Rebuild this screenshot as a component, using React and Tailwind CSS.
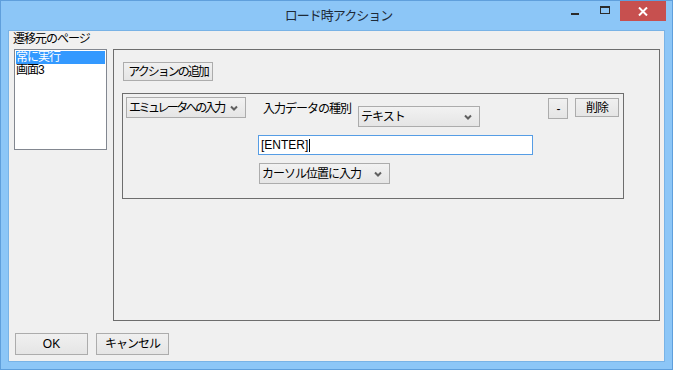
import React from 'react';

const Chevron = () => (
  <svg width="8" height="6" viewBox="0 0 8 6" className="shrink-0">
    <path d="M1 1.5 L4 4.5 L7 1.5" fill="none" stroke="#606060" strokeWidth="2" />
  </svg>
);

const Combo = ({ label, className, textClass = '' }) => (
  <div className={`flex items-center h-[21px] border border-[#acacac] bg-linear-to-b from-[#f2f2f2] to-[#e5e5e5] pl-[2px] pr-[7px] ${className}`}>
    <span className={`flex-1 leading-[14px] whitespace-nowrap overflow-hidden ${textClass}`}>{label}</span>
    <Chevron />
  </div>
);

const Btn = ({ children, className }) => (
  <div className={`flex items-center justify-center border border-[#acacac] bg-linear-to-b from-[#f0f0f0] to-[#e5e5e5] leading-[14px] whitespace-nowrap ${className}`}>
    {children}
  </div>
);

const App = () => {
  return (
    <div className="w-[673px] h-[370px] bg-[#8cc6f7] border border-[#5f9fdc] flex flex-col font-['Liberation_Sans','Noto_Sans_CJK_JP',sans-serif] text-[12px] text-black tracking-[-1px] select-none">
      {/* Title bar */}
      <div className="h-[29px] flex items-start relative">
        <div className="flex-1 text-center text-[13px] text-[#1e2a38] leading-[16px] pt-[7px] pl-[4px]">ロード時アクション</div>
        <div className="absolute right-[6px] top-0 flex items-start">
          <div className="w-[30px] h-[20px] flex items-center justify-center">
            <div className="w-[8px] h-[2px] bg-[#2b2b2b] mt-[6px]"></div>
          </div>
          <div className="w-[30px] h-[20px] flex items-center justify-center">
            <div className="w-[10px] h-[8px] border border-[#2b2b2b] border-t-2 -mt-[2px]"></div>
          </div>
          <div className="w-[46px] h-[20px] bg-[#c7504f] flex items-center justify-center">
            <svg width="10" height="9" viewBox="0 0 10 9">
              <path d="M1 0.5 L9 8.5 M9 0.5 L1 8.5" stroke="#fff" strokeWidth="2" />
            </svg>
          </div>
        </div>
      </div>

      {/* Client area */}
      <div className="mx-[7px] h-[332px] bg-[#f0f0f0] border border-[#79b3e6] flex flex-col">
        <div className="h-[18px] pl-[4px] pt-[1px] leading-[14px]">遷移元のページ</div>

        <div className="flex items-start">
          {/* list box */}
          <div className="ml-[5px] w-[93px] h-[101px] bg-white border border-[#828790] p-[1px]">
            <div className="h-[13px] bg-[#3399ff] text-white leading-[13px] overflow-hidden">常に実行</div>
            <div className="h-[13px] leading-[13px] overflow-hidden">画面3</div>
          </div>

          {/* action panel */}
          <div className="ml-[6px] w-[547px] h-[272px] border border-[#6d6d6d] flex flex-col">
            <Btn className="ml-[9px] mt-[12px] w-[90px] h-[19px] tracking-[-2px]">アクションの追加</Btn>

            <div className="ml-[8px] mt-[12px] w-[502px] h-[106px] border border-[#6d6d6d] flex flex-col">
              <div className="flex items-start">
                <Combo label="エミュレータへの入力" className="ml-[3px] mt-[3px] w-[120px]" textClass="tracking-[-2.5px]" />
                <div className="ml-[17px] mt-[8px] w-[95px] leading-[14px]">入力データの種別</div>
                <Combo label="テキスト" className="mt-[12px] w-[122px]" />
                <Btn className="ml-[68px] mt-[4px] w-[20px] h-[21px]">-</Btn>
                <Btn className="ml-[7px] mt-[4px] w-[44px] h-[19px]">削除</Btn>
              </div>
              <div className="ml-[135px] mt-[8px] w-[275px] h-[20px] border border-[#569de5] bg-white flex items-center pl-[2px] tracking-normal">
                <span className="leading-[14px]">[ENTER]</span>
                <div className="w-[1px] h-[13px] bg-black ml-[1px]"></div>
              </div>
              <Combo label="カーソル位置に入力" className="ml-[136px] mt-[8px] w-[131px]" />
            </div>
          </div>
        </div>

        {/* footer buttons */}
        <div className="flex mt-[12px] ml-[6px] gap-[8px]">
          <Btn className="w-[73px] h-[22px] tracking-normal">OK</Btn>
          <Btn className="w-[73px] h-[22px]">キャンセル</Btn>
        </div>
      </div>
    </div>
  );
};

export default App;
